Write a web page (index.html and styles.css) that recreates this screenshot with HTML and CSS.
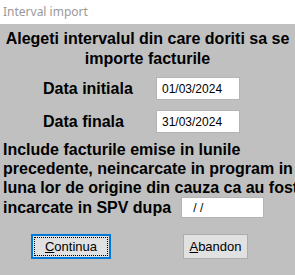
FILE: index.html
```html
<!DOCTYPE html>
<html lang="ro">
<head>
    <meta charset="UTF-8">
    <title>Interval import</title>
    <link rel="stylesheet" href="styles.css">
</head>
<body>
    <div class="title-bar">Interval import</div>
    <div class="dialog">
        <h1 class="heading">Alegeti intervalul din care doriti sa se importe facturile</h1>

        <div class="dates">
            <label class="date-label">Data initiala</label>
            <input class="date-input" type="text" value="01/03/2024">
            <label class="date-label">Data finala</label>
            <input class="date-input" type="text" value="31/03/2024">
        </div>

        <p class="note">
            Include facturile emise in lunile<br>
            precedente, neincarcate in program in<br>
            luna lor de origine din cauza ca au fost
        </p>
        <div class="note-row">
            <span class="note-last">incarcate in SPV dupa</span>
            <input class="spv-input" type="text" value=" / /">
        </div>

        <div class="buttons">
            <button class="btn btn-default"><u>C</u>ontinua</button>
            <button class="btn btn-cancel"><u>A</u>bandon</button>
        </div>
    </div>
</body>
</html>
```

FILE: styles.css
```css
body {
    margin: 0;
    padding: 0;
    width: 295px;
    height: 275px;
    overflow: hidden;
    background: #c0c0c0;
    font-family: "Liberation Sans", Arial, sans-serif;
    color: #000;
}

.title-bar {
    height: 24px;
    line-height: 24px;
    padding-left: 3px;
    background: #fff;
    color: #9a9a9a;
    font-family: "Noto Sans", sans-serif;
    font-size: 12px;
}

.dialog {
    height: 251px;
    background: #c0c0c0;
    padding-top: 5px;
    box-sizing: border-box;
}

.heading {
    margin: 0;
    font-size: 16px;
    line-height: 20px;
    font-weight: bold;
    text-align: center;
}

.dates {
    display: grid;
    grid-template-columns: 113px 84px;
    row-gap: 10px;
    align-items: center;
    margin: 8px 0 0 43px;
}

.date-label {
    font-size: 16px;
    font-weight: bold;
}

.date-input {
    width: 84px;
    height: 23px;
    box-sizing: border-box;
    border: 1px solid #b4b4b4;
    background: #fff;
    padding: 0 0 0 5px;
    font-family: "Liberation Sans", Arial, sans-serif;
    font-size: 12px;
    color: #000;
}

.note {
    margin: 7px 0 0 3px;
    font-size: 16px;
    line-height: 19px;
    font-weight: bold;
    white-space: nowrap;
}

.note-row {
    display: flex;
    align-items: center;
    margin: 0 0 0 3px;
    height: 21px;
}

.note-last {
    font-size: 16px;
    font-weight: bold;
    width: 178px;
}

.spv-input {
    width: 83px;
    height: 21px;
    box-sizing: border-box;
    border: 1px solid #b4b4b4;
    background: #fff;
    padding: 0 0 0 8px;
    font-family: "Liberation Sans", Arial, sans-serif;
    font-size: 12px;
    color: #000;
}

.buttons {
    display: flex;
    margin: 16px 0 0 31px;
}

.btn {
    height: 25px;
    box-sizing: border-box;
    background: #e1e1e1;
    font-family: "Liberation Sans", Arial, sans-serif;
    font-size: 13px;
    color: #000;
    padding: 0;
}

.btn-default {
    position: relative;
    width: 80px;
    border: 2px solid #0078d7;
}

.btn-default::after {
    content: "";
    position: absolute;
    top: 1px;
    left: 1px;
    right: 1px;
    bottom: 1px;
    border: 1px dotted #000;
}

.btn-cancel {
    width: 65px;
    margin-left: 72px;
    border: 1px solid #adadad;
}
```
